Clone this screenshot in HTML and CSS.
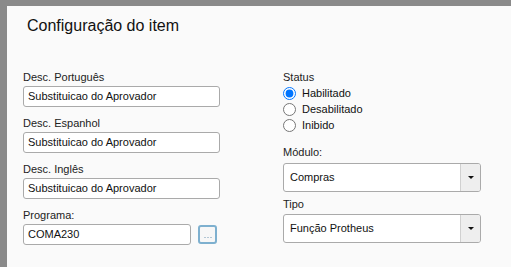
FILE: index.html
```html
<!DOCTYPE html>
<html lang="pt">
<head>
<meta charset="utf-8">
<link rel="stylesheet" href="styles.css">
</head>
<body>
<div class="frame">
  <div class="panel">
    <h1 class="title">Configuração do item</h1>
    <div class="body">
      <div class="col col-left">
        <div class="field">
          <label class="lbl">Desc. Português</label>
          <div class="input">Substituicao do Aprovador</div>
        </div>
        <div class="field">
          <label class="lbl">Desc. Espanhol</label>
          <div class="input">Substituicao do Aprovador</div>
        </div>
        <div class="field">
          <label class="lbl">Desc. Inglês</label>
          <div class="input">Substituicao do Aprovador</div>
        </div>
        <div class="field">
          <label class="lbl">Programa:</label>
          <div class="row">
            <div class="input input-short">COMA230</div>
            <div class="lookup"><span class="dot"></span><span class="dot"></span><span class="dot"></span></div>
          </div>
        </div>
      </div>
      <div class="col col-right">
        <div class="lbl">Status</div>
        <div class="radios">
          <label class="radio"><input type="radio" name="st" checked><span>Habilitado</span></label>
          <label class="radio"><input type="radio" name="st"><span>Desabilitado</span></label>
          <label class="radio"><input type="radio" name="st"><span>Inibido</span></label>
        </div>
        <div class="lbl lbl-modulo">Módulo:</div>
        <div class="select">
          <span class="select-text">Compras</span>
          <span class="select-btn"><span class="caret"></span></span>
        </div>
        <div class="lbl lbl-tipo">Tipo</div>
        <div class="select">
          <span class="select-text">Função Protheus</span>
          <span class="select-btn"><span class="caret"></span></span>
        </div>
      </div>
    </div>
  </div>
</div>
</body>
</html>
```

FILE: styles.css
```css
html, body {
  margin: 0;
  padding: 0;
}
body {
  width: 511px;
  height: 267px;
  overflow: hidden;
  background: #8a8a8a;
  font-family: "Liberation Sans", Arial, sans-serif;
  color: #111;
}
.frame {
  padding: 6px 0 0 7px;
  height: 267px;
  box-sizing: border-box;
  border-left: 2px solid #a3a9ae;
  margin-left: -2px;
}
.panel {
  background: #fafafa;
  height: 261px;
  box-sizing: border-box;
  padding: 11px 0 0 16px;
}
.title {
  margin: 0 0 0 4px;
  font-size: 16px;
  font-weight: normal;
  line-height: 18px;
  height: 18px;
  color: #111;
}
.body {
  display: flex;
  margin-top: 36px;
}
.col-left {
  width: 197px;
}
.col-right {
  width: 198px;
  margin-left: 63px;
}
.lbl {
  display: block;
  font-size: 11px;
  line-height: 13px;
  height: 13px;
  color: #222;
}
.field {
  margin-bottom: 10px;
}
.field .lbl {
  margin-bottom: 2px;
}
.input {
  box-sizing: border-box;
  height: 21px;
  border: 1px solid #aaa;
  border-radius: 3px;
  background: #fff;
  padding: 0 4px;
  font-size: 11px;
  line-height: 19px;
  color: #111;
  white-space: nowrap;
}
.row {
  display: flex;
  align-items: flex-start;
}
.input-short {
  width: 168px;
}
.lookup {
  box-sizing: border-box;
  width: 19px;
  height: 19px;
  margin-left: 7px;
  margin-top: 1px;
  border: 2px solid #7eb0cf;
  border-radius: 3px;
  background: #f7f7f7;
  display: flex;
  justify-content: center;
  align-items: flex-end;
  gap: 1px;
  padding-bottom: 4px;
}
.dot {
  width: 2px;
  height: 1px;
  background: #b3c6d4;
}
.radios {
  display: flex;
  flex-direction: column;
  margin-top: 1px;
}
.radio {
  display: flex;
  align-items: center;
  height: 16px;
  font-size: 11px;
  color: #111;
}
.radio input {
  margin: 0 6px 0 0;
  width: 13px;
  height: 13px;
  accent-color: #0075ff;
}
.lbl-modulo {
  margin-top: 13px;
  margin-bottom: 4px;
}
.lbl-tipo {
  margin-top: 6px;
  margin-bottom: 3px;
}
.select {
  box-sizing: border-box;
  height: 29px;
  border: 1px solid #aaa;
  border-radius: 3px;
  background: #fff;
  display: flex;
  overflow: hidden;
}
.select-text {
  flex: 1;
  padding-left: 6px;
  font-size: 11px;
  line-height: 27px;
  color: #111;
}
.select-btn {
  width: 19px;
  border-left: 1px solid #d0d0d0;
  background: #eeeeee;
  display: flex;
  align-items: center;
  justify-content: center;
}
.caret {
  width: 0;
  height: 0;
  border-left: 3px solid transparent;
  border-right: 3px solid transparent;
  border-top: 3px solid #111;
}
```
